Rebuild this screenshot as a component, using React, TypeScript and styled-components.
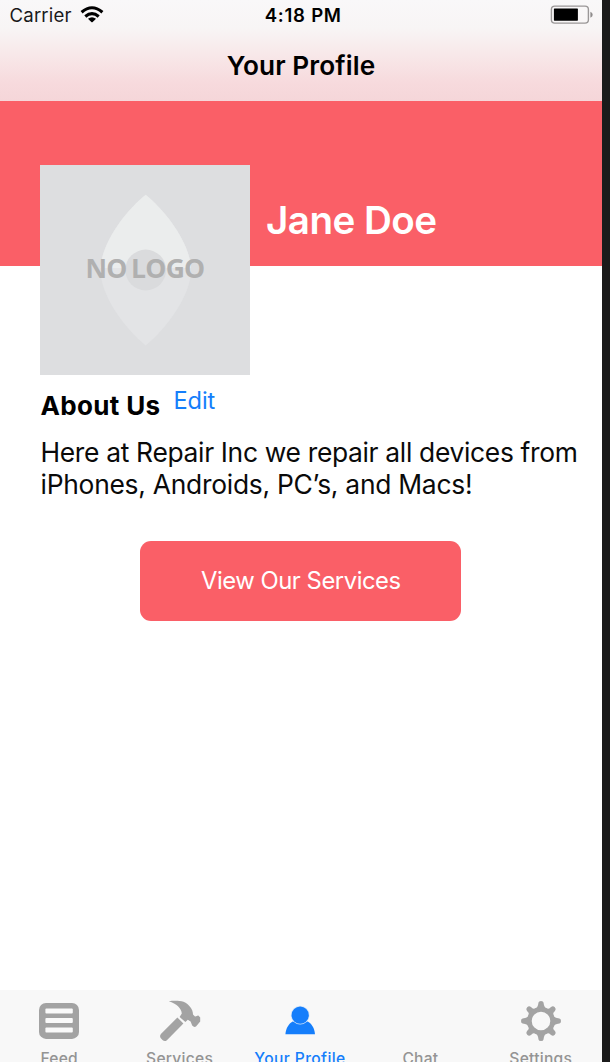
import React from "react";
import styled, { createGlobalStyle } from "styled-components";

const coral = "#fa5f67";
const blue = "#157efb";
const grey = "#a3a3a3";

const GlobalStyle = createGlobalStyle`
  * { box-sizing: border-box; }
  html, body { margin: 0; padding: 0; overflow: hidden; }
  body { background: #1b1b1b; font-family: Inter, "Liberation Sans", sans-serif; }
  h1, h2, p { margin: 0; }
`;

const Screen = styled.div`
  width: 602px;
  height: 1062px;
  display: flex;
  flex-direction: column;
  overflow: hidden;
  background: #fff;
  color: #000;
`;

const Header = styled.header`
  flex: none;
  height: 101px;
  background: linear-gradient(#f9f8f9 0%, #f8f5f5 28%, #f8e9ea 52%, #f7dadd 82%, #f5d6d9 100%);
`;

const StatusBar = styled.div`
  display: grid;
  grid-template-columns: 1fr auto 1fr;
  align-items: center;
  height: 30px;
  padding: 0 9px 0 9.5px;
`;

const Carrier = styled.div`
  display: flex;
  align-items: center;
  gap: 8.5px;
  font-size: 18.6px;
  line-height: 28px;
  letter-spacing: 0.18px;
  color: #1a1a1a;
`;

const Clock = styled.div`
  font-size: 18.6px;
  line-height: 28px;
  font-weight: 600;
  letter-spacing: 0.72px;
  padding-left: 4px;
`;

const Battery = styled.svg`
  justify-self: end;
  display: block;
`;

const Title = styled.h1`
  margin-top: 16px;
  text-align: center;
  font-size: 26.2px;
  line-height: 39px;
  font-weight: 600;
  letter-spacing: 0.1px;
`;

const Banner = styled.section`
  flex: none;
  height: 165px;
  padding: 64px 0 0 40px;
  display: flex;
  align-items: flex-start;
  gap: 16px;
  background: ${coral};
`;

const Logo = styled.svg`
  flex: none;
  width: 210px;
  height: 210px;
  display: block;
`;

const Name = styled.h2`
  padding-top: 30px;
  font-size: 38.6px;
  line-height: 50px;
  font-weight: 600;
  letter-spacing: -0.55px;
  color: #fff;
  white-space: nowrap;
`;

const Main = styled.main`
  flex: 1;
  padding: 120px 0 0 40.5px;
`;

const AboutRow = styled.div`
  display: flex;
  align-items: flex-start;
  gap: 13px;
  height: 50px;
`;

const AboutTitle = styled.h2`
  font-size: 26px;
  line-height: 40px;
  font-weight: 700;
  letter-spacing: 0.35px;
`;

const EditLink = styled.a`
  font-size: 23.6px;
  line-height: 30px;
  letter-spacing: -0.1px;
  color: ${blue};
`;

const Copy = styled.p`
  font-size: 26.4px;
  line-height: 32px;
  white-space: nowrap;
  color: #0a0a0a;
`;

const CopyLine = styled.span<{ $track: number }>`
  display: block;
  letter-spacing: ${(p) => p.$track}px;
`;

const ServicesButton = styled.button`
  display: block;
  width: 321px;
  height: 80px;
  margin: 41px 0 0 99.8px;
  padding: 0;
  border: 0;
  border-radius: 11px;
  background: ${coral};
  color: #fff;
  font: 400 23.8px/80px Inter, "Liberation Sans", sans-serif;
  letter-spacing: -0.45px;
`;

const TabBar = styled.nav`
  flex: none;
  height: 72px;
  display: grid;
  grid-template-columns: repeat(5, 120.4px);
  padding-top: 9px;
  margin-left: -1px;
  background: #f8f8f8;
  overflow: hidden;
`;

const Tab = styled.a<{ $active?: boolean }>`
  display: flex;
  flex-direction: column;
  align-items: center;
  height: 80px;
  font-size: 15.6px;
  line-height: 20px;
  font-weight: 500;
  letter-spacing: ${(p) => (p.$active ? 0.4 : 0.25)}px;
  white-space: nowrap;
  color: ${(p) => (p.$active ? blue : "#949494")};
`;

const TabIcon = styled.svg<{ $active?: boolean }>`
  flex: none;
  width: 44px;
  height: 44px;
  margin-bottom: 6px;
  fill: ${(p) => (p.$active ? blue : grey)};
`;

const diagonals = [45, 135, 225, 315];
const straights = [0, 90, 180, 270];

function FeedIcon() {
  return (
    <TabIcon viewBox="0 0 44 44">
      <rect x="2" y="3.9" width="40" height="36" rx="7" />
      <g fill="#fafafa">
        <rect x="8.4" y="9.6" width="27.4" height="5" rx="1" />
        <rect x="8.4" y="19" width="27.4" height="5" rx="1" />
        <rect x="8.4" y="28.5" width="27.4" height="5" rx="1" />
      </g>
    </TabIcon>
  );
}

function HammerIcon() {
  return (
    <TabIcon viewBox="0 0 44 44">
      <path d="M10.8 2.2C16 1.5 21.5 1.6 25.5 2.8C28.5 4 30.6 6 32.2 8C34 10.2 35 12.8 35 15.6L37 17.4C38.6 17.6 39.2 16.2 40.6 16.7L42.2 18.4L42.2 22.6L38 27.6Q36 28.7 34.2 26.6L32.6 22.6L29.8 20.8L27.4 23L21.6 18L23.8 14.6C23.4 9 18.5 4.6 10.8 2.2Z" />
      <path d="M19.4 18.6L25.4 24.5L8.9 41.2Q6.6 43 4.5 41L2.6 39Q1.2 37.1 2.9 35.1Z" />
    </TabIcon>
  );
}

function PersonIcon() {
  return (
    <TabIcon viewBox="0 0 44 44" $active>
      <path d="M7.4 35.2C8 29 10.6 24.6 14.6 22.4H29.8C33.8 24.6 36.4 29 37 35.2Z" />
      <circle cx="22.2" cy="16.2" r="9.4" fill="#d5e6f9" />
      <circle cx="22.2" cy="16.2" r="8.6" />
    </TabIcon>
  );
}

function GearIcon() {
  return (
    <TabIcon viewBox="0 0 44 44">
      {straights.map((angle) => (
        <path
          key={angle}
          transform={`rotate(${angle} 22 22)`}
          d="M15.4 10.6Q19 9 19.5 3.6Q19.7 2 22 2Q24.3 2 24.5 3.6Q25 9 28.6 10.6Z"
        />
      ))}
      {diagonals.map((angle) => (
        <path
          key={angle}
          transform={`rotate(${angle} 22 22)`}
          d="M15.6 10.6Q19.6 9 19.2 5Q19.5 2.5 22 2.5Q24.5 2.5 24.8 5Q24.4 9 28.4 10.6Z"
        />
      ))}
      <circle cx="22" cy="22" r="11.7" fill="none" stroke={grey} strokeWidth="4.8" />
    </TabIcon>
  );
}

export default function App() {
  return (
    <>
      <GlobalStyle />
      <Screen>
        <Header>
          <StatusBar>
            <Carrier>
              Carrier
              <svg width="24" height="18" viewBox="0 0 24 18" fill="none" stroke="#000" strokeWidth="3.1">
                <path d="M1.6 6.2Q12 -2.7 22.4 6.2" />
                <path d="M5.3 10.5Q12 4.8 18.7 10.5" />
                <path d="M8 12.8Q12 9.8 16 12.8L12.7 16Q12 16.6 11.3 16Z" fill="#000" stroke="none" />
              </svg>
            </Carrier>
            <Clock>4:18 PM</Clock>
            <Battery width="43" height="20" viewBox="0 0 43 20">
              <rect x="1.4" y="1.1" width="37" height="17" rx="3.4" fill="none" stroke="#9a9797" strokeWidth="1.4" />
              <rect x="3.9" y="3.5" width="24" height="12.2" rx=".6" />
              <path d="M40.4 6.8Q42.7 7.7 42.7 9.7Q42.7 11.8 40.4 12.7Z" fill="#8f8c8c" />
            </Battery>
          </StatusBar>
          <Title>Your Profile</Title>
        </Header>
        <Banner>
          <Logo viewBox="0 0 210 210">
            <defs>
              <clipPath id="upper">
                <rect width="210" height="103" />
              </clipPath>
            </defs>
            <rect width="210" height="210" fill="#dddee0" />
            <path d="M105.7 29.8C127 47 151 80 151 105C151 130 127 163 105.7 180.5C84 163 60.5 130 60.5 105C60.5 80 84 47 105.7 29.8Z" fill="#e3e4e6" />
            <path d="M105.7 29.8C127 47 151 80 151 105C151 130 127 163 105.7 180.5C84 163 60.5 130 60.5 105C60.5 80 84 47 105.7 29.8Z" fill="#ebeded" clipPath="url(#upper)" />
            <circle cx="105.7" cy="105" r="20.4" fill="#dadbdd" />
            <text x="45.4" y="112.8" fill="#b0b0b0" fontFamily="'Open Sans', 'Noto Sans', sans-serif" fontWeight="700" fontSize="27.6" wordSpacing="-1.6" letterSpacing="-0.8" textLength="119" lengthAdjust="spacingAndGlyphs">
              NO LOGO
            </text>
          </Logo>
          <Name>Jane Doe</Name>
        </Banner>
        <Main>
          <AboutRow>
            <AboutTitle>About Us</AboutTitle>
            <EditLink>Edit</EditLink>
          </AboutRow>
          <Copy>
            <CopyLine $track={-0.32}>Here at Repair Inc we repair all devices from</CopyLine>
            <CopyLine $track={-0.26}>iPhones, Androids, PC’s, and Macs!</CopyLine>
          </Copy>
          <ServicesButton>View Our Services</ServicesButton>
        </Main>
        <TabBar>
          <Tab><FeedIcon />Feed</Tab>
          <Tab><HammerIcon />Services</Tab>
          <Tab $active><PersonIcon />Your Profile</Tab>
          <Tab><TabIcon viewBox="0 0 44 44" />Chat</Tab>
          <Tab><GearIcon />Settings</Tab>
        </TabBar>
      </Screen>
    </>
  );
}
